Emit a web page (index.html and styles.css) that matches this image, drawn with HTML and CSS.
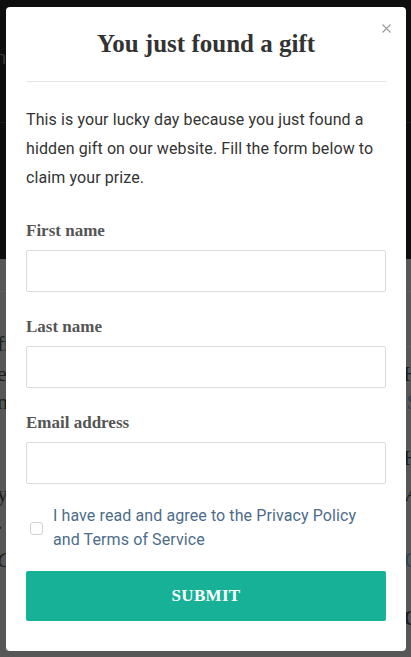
FILE: index.html
```html
<!DOCTYPE html>
<html lang="en">
<head>
<meta charset="utf-8">
<title>You just found a gift</title>
<link rel="stylesheet" href="styles.css">
</head>
<body>
<div class="page">
  <header class="page-header">
    <div class="header-top"><span class="frag light">n</span></div>
    <div class="header-bottom"></div>
  </header>
  <main class="page-body">
    <div class="rule"></div>
    <div class="rule second"></div>
    <div class="row r1"><span class="frag">fr</span><span class="frag bold"></span></div>
    <div class="row r2"><span class="frag">e</span><span class="frag bold">H</span></div>
    <div class="row r3"><span class="frag">ny</span><span class="frag blue">S</span></div>
    <div class="row r4"><span class="frag"></span><span class="frag bold">H</span></div>
    <div class="row r5"><span class="frag">y</span><span class="frag italic">A</span></div>
    <div class="row r6"><span class="frag">.</span><span class="frag"></span></div>
    <div class="row r7"><span class="frag italic">C</span><span class="frag blue">C</span></div>
    <div class="row r8"><span class="frag"></span><span class="frag bold">C</span></div>
  </main>
</div>

<div class="overlay">
  <div class="modal">
    <button class="close" aria-label="Close">
      <svg width="9" height="9" viewBox="0 0 9 9"><path d="M0.5 0.5 L8.5 8.5 M8.5 0.5 L0.5 8.5" stroke="#9a9a9a" stroke-width="1.1" fill="none"/></svg>
    </button>
    <h1 class="title">You just found a gift</h1>
    <hr class="divider">
    <p class="intro">This is your lucky day because you just found a hidden gift on our website. Fill the form below to claim your prize.</p>
    <form class="form">
      <div class="field">
        <label class="label" for="fn">First name</label>
        <input class="input" id="fn" type="text">
      </div>
      <div class="field">
        <label class="label" for="ln">Last name</label>
        <input class="input" id="ln" type="text">
      </div>
      <div class="field last">
        <label class="label" for="em">Email address</label>
        <input class="input" id="em" type="email">
      </div>
      <label class="agree">
        <span class="box"></span>
        <span class="agree-text">I have read and agree to the Privacy Policy and Terms of Service</span>
      </label>
      <button type="button" class="submit">SUBMIT</button>
    </form>
  </div>
</div>
</body>
</html>
```

FILE: styles.css
```css
* { box-sizing: border-box; }
html, body { margin: 0; padding: 0; }
body {
  width: 411px;
  height: 657px;
  overflow: hidden;
  font-family: Roboto, "Liberation Sans", sans-serif;
  background: #575757;
}

/* background page (dimmed) */
.page { width: 411px; height: 657px; }
.page-header { background: #0e0e0e; height: 259px; display: flex; flex-direction: column; }
.header-top { height: 123px; border-bottom: 1px solid #1c1c1c; padding-top: 48px; }
.header-bottom { flex: 1; }
.page-body { background: #575757; height: 398px; padding-top: 32px; }
.rule { height: 1px; background: #606060; margin-top: 0; }
.rule.second { margin-top: 54px; }
.row {
  display: flex;
  justify-content: space-between;
  font-family: "Liberation Serif", serif;
  font-size: 22px;
  line-height: 26px;
  height: 26px;
}
.frag { color: #1d1d1d; margin-left: -3px; margin-right: -8px; }
.frag.light { color: #3a3a3a; font-family: "Liberation Sans", sans-serif; font-size: 18px; margin-left: -4px; }
.frag.bold { font-weight: bold; }
.frag.blue { color: #2e3e50; }
.frag.italic { font-style: italic; }
.r1 { margin-top: -16px; }
.r2 { margin-top: 4px; }
.r3 { margin-top: 2px; }
.r4 { margin-top: 30px; }
.r5 { margin-top: 10px; }
.r6 { margin-top: 2px; }
.r7 { margin-top: 12px; }
.r8 { margin-top: 32px; }

/* overlay + modal */
.overlay {
  position: fixed;
  inset: 0;
  display: flex;
  justify-content: center;
  padding-top: 7px;
}
.modal {
  position: relative;
  width: 400px;
  height: 644px;
  margin-left: 1px;
  background: #fff;
  border-radius: 4px;
  padding: 20px 20px 30px;
}
.close {
  position: absolute;
  top: 17px;
  right: 15px;
  width: 9px;
  height: 9px;
  padding: 0;
  border: 0;
  background: none;
  display: flex;
}
.title {
  margin: 0;
  font-family: "Liberation Serif", "DejaVu Serif", serif;
  font-weight: bold;
  font-size: 25px;
  line-height: 34px;
  color: #333;
  text-align: center;
}
.divider {
  margin: 20px 0 0;
  border: 0;
  height: 1px;
  background: #e6e6e6;
}
.intro {
  margin: 24px 0 27px;
  font-size: 16px;
  line-height: 28.8px;
  letter-spacing: 0.1px;
  color: #333;
}
.form { display: flex; flex-direction: column; }
.field { display: flex; flex-direction: column; margin-bottom: 23px; }
.field.last { margin-bottom: 20px; }
.label {
  font-family: "Liberation Serif", "DejaVu Serif", serif;
  font-weight: bold;
  font-size: 17px;
  line-height: 24px;
  color: #555;
  margin-bottom: 7px;
}
.input {
  height: 42px;
  width: 100%;
  border: 1px solid #dcdcdc;
  border-radius: 2px;
  background: #fff;
  font: inherit;
}
.agree {
  display: flex;
  align-items: center;
  margin-bottom: 19px;
}
.box {
  flex: none;
  width: 13px;
  height: 13px;
  margin-left: 4px;
  margin-right: 10px;
  border: 1.5px solid #d0d0d0;
  border-radius: 3px;
  background: #fff;
}
.agree-text {
  font-size: 16px;
  line-height: 24px;
  letter-spacing: 0.1px;
  padding-right: 24px;
  color: #4d6c8a;
}
.submit {
  height: 50px;
  width: 100%;
  border: 0;
  border-radius: 2px;
  background: #17b197;
  color: #fff;
  font-family: "Liberation Serif", "DejaVu Serif", serif;
  font-weight: bold;
  font-size: 17px;
  letter-spacing: 0.3px;
}
```
